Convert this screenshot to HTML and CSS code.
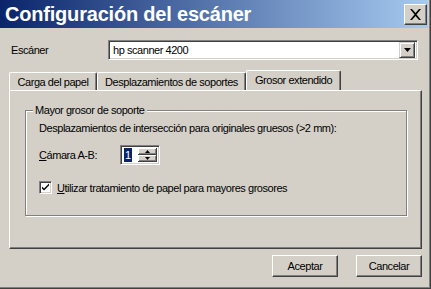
FILE: index.html
```html
<!DOCTYPE html>
<html lang="es">
<head>
<meta charset="utf-8">
<title>Configuración del escáner</title>
<link rel="stylesheet" href="styles.css">
</head>
<body>
<div class="window">
  <div class="titlebar">
    <span class="title">Configuración del escáner</span>
    <span class="close"><svg width="13" height="11" viewBox="0 0 13 11"><path d="M1 0h2l3.5 4 3.5-4h2L7.5 5.5 12 11h-2L6.5 7 3 11H1l4.5-5.5z" fill="#000"/></svg></span>
  </div>
  <div class="scanner-row">
    <span class="label">Escáner</span>
    <div class="combo">
      <span class="combo-text">hp scanner 4200</span>
      <span class="combo-btn"><svg width="7" height="4" viewBox="0 0 7 4"><path d="M0 0h7L3.5 4z" fill="#000"/></svg></span>
    </div>
  </div>
  <div class="tabs">
    <span class="tab t1">Carga del papel</span>
    <span class="tab t2">Desplazamientos de soportes</span>
    <span class="tab active">Grosor extendido</span>
  </div>
  <div class="panel">
    <div class="group">
      <span class="legend">Mayor grosor de soporte</span>
      <div class="desc">Desplazamientos de intersección para originales gruesos (&gt;2 mm):</div>
      <div class="cam-row">
        <span class="cam-label"><u>C</u>ámara A-B:</span>
        <div class="spin">
          <span class="spin-field"><span class="sel">1</span></span>
          <span class="spin-btns">
            <span class="sb"><svg width="5" height="3" viewBox="0 0 5 3"><path d="M2.5 0L5 3H0z" fill="#000"/></svg></span>
            <span class="sb"><svg width="5" height="3" viewBox="0 0 5 3"><path d="M0 0h5L2.5 3z" fill="#000"/></svg></span>
          </span>
        </div>
      </div>
      <div class="check-row">
        <span class="check"><svg width="9" height="9" viewBox="0 0 9 9"><path d="M1 3.5l2 2 5-5v2l-5 5-2-2z" fill="#000"/></svg></span>
        <span class="check-label"><u>U</u>tilizar tratamiento de papel para mayores grosores</span>
      </div>
    </div>
  </div>
  <div class="buttons">
    <span class="btn">Aceptar</span>
    <span class="btn">Cancelar</span>
  </div>
</div>
</body>
</html>
```
FILE: styles.css
```css
* { box-sizing: border-box; }
html, body { margin: 0; padding: 0; }
body {
  background: #d4d0c8;
  font-family: "Liberation Sans", Arial, sans-serif;
  font-size: 11px;
  letter-spacing: -0.45px;
  color: #000;
  overflow: hidden;
}
.window {
  width: 431px;
  height: 289px;
  border-right: 1px solid #404040;
  border-bottom: 1px solid #404040;
  box-shadow: inset -1px -1px 0 #808080;
  padding-right: 2px;
  display: flex;
  flex-direction: column;
}
.titlebar {
  height: 28px;
  flex: none;
  display: flex;
  align-items: center;
  justify-content: space-between;
  padding: 0 1px 0 5px;
  background: linear-gradient(to right, #0a246a, #a6caf0);
}
.title {
  color: #fff;
  font-weight: bold;
  font-size: 20px;
  letter-spacing: -0.2px;
}
.close {
  width: 23px;
  height: 21px;
  display: flex;
  align-items: center;
  justify-content: center;
  background: #d4d0c8;
  border-top: 1px solid #fff;
  border-left: 1px solid #fff;
  border-right: 1px solid #404040;
  border-bottom: 1px solid #404040;
  box-shadow: inset -1px -1px 0 #808080;
}
.scanner-row {
  display: flex;
  align-items: center;
  margin-top: 12px;
  padding-left: 11px;
  height: 20px;
}
.label { width: 97px; }
.combo {
  width: 310px;
  height: 20px;
  display: flex;
  align-items: center;
  background: #fff;
  border-top: 1px solid #808080;
  border-left: 1px solid #808080;
  border-right: 1px solid #fff;
  border-bottom: 1px solid #fff;
  box-shadow: inset 1px 1px 0 #404040, inset -1px -1px 0 #d4d0c8;
  padding: 2px;
}
.combo-text { flex: 1; padding-left: 2px; }
.combo-btn {
  width: 16px;
  height: 16px;
  display: flex;
  align-items: center;
  justify-content: center;
  background: #d4d0c8;
  border-top: 1px solid #d4d0c8;
  border-left: 1px solid #d4d0c8;
  border-right: 1px solid #404040;
  border-bottom: 1px solid #404040;
  box-shadow: inset 1px 1px 0 #fff, inset -1px -1px 0 #808080;
}
.tabs {
  display: flex;
  align-items: flex-end;
  height: 20px;
  margin: 10px 0 0 9px;
}
.tab {
  height: 18px;
  display: flex;
  align-items: center;
  justify-content: center;
  border-top: 1px solid #fff;
  border-left: 1px solid #fff;
  border-right: 1px solid #404040;
  box-shadow: inset -1px 0 0 #808080;
  border-radius: 2px 2px 0 0;
  padding-top: 1px;
}
.t1 { width: 88px; }
.t2 { width: 149px; }
.tab.active {
  width: 95px;
  height: 20px;
  padding-bottom: 2px;
}
.panel {
  margin-left: 9px;
  width: 413px;
  height: 159px;
  border-left: 1px solid #fff;
  border-top: 1px solid #fff;
  border-right: 1px solid #404040;
  border-bottom: 1px solid #404040;
  box-shadow: inset -1px -1px 0 #808080;
  padding: 19px 0 0 15px;
}
.group {
  position: relative;
  width: 382px;
  height: 106px;
  border: 1px solid #808080;
  box-shadow: inset 1px 1px 0 #fff, 1px 1px 0 #fff;
  padding: 10px 0 0 13px;
}
.legend {
  position: absolute;
  left: 7px;
  top: -8px;
  padding: 0 2px;
  background: #d4d0c8;
  line-height: 14px;
}
.desc { line-height: 14px; }
.cam-row {
  display: flex;
  align-items: center;
  margin-top: 10px;
  height: 20px;
}
.cam-label { width: 81px; }
.spin {
  width: 40px;
  height: 20px;
  display: flex;
  background: #fff;
  border-top: 1px solid #808080;
  border-left: 1px solid #808080;
  border-right: 1px solid #fff;
  border-bottom: 1px solid #fff;
  box-shadow: inset 1px 1px 0 #404040, inset -1px -1px 0 #d4d0c8;
  padding: 2px;
}
.spin-field { flex: 1; display: flex; align-items: center; padding-left: 1px; }
.sel { background: #0a246a; color: #fff; padding: 0 1px; line-height: 14px; }
.spin-btns { width: 19px; display: flex; flex-direction: column; }
.sb {
  flex: 1;
  display: flex;
  align-items: center;
  justify-content: center;
  background: #d4d0c8;
  border-right: 1px solid #404040;
  border-bottom: 1px solid #404040;
  box-shadow: inset 1px 1px 0 #fff, inset -1px -1px 0 #808080;
}
.check-row {
  display: flex;
  align-items: center;
  margin-top: 16px;
}
.check {
  width: 13px;
  height: 13px;
  display: flex;
  align-items: center;
  justify-content: center;
  background: #fff;
  border-top: 1px solid #808080;
  border-left: 1px solid #808080;
  border-right: 1px solid #fff;
  border-bottom: 1px solid #fff;
  box-shadow: inset 1px 1px 0 #404040, inset -1px -1px 0 #d4d0c8;
  margin-right: 5px;
}
.buttons {
  display: flex;
  justify-content: flex-end;
  gap: 18px;
  margin-top: 6px;
  width: 422px;
}
.btn {
  width: 66px;
  height: 22px;
  display: flex;
  align-items: center;
  justify-content: center;
  border-top: 1px solid #fff;
  border-left: 1px solid #fff;
  border-right: 1px solid #404040;
  border-bottom: 1px solid #404040;
  box-shadow: inset -1px -1px 0 #808080;
}
```
